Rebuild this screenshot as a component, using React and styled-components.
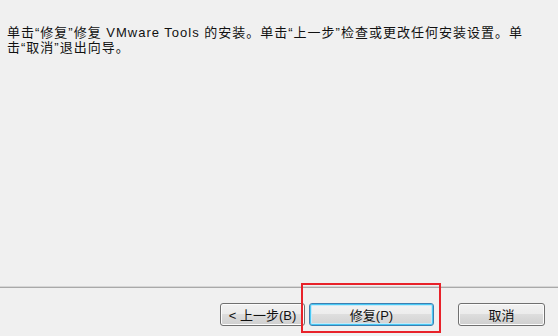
import React from "react";
import styled, { createGlobalStyle, css } from "styled-components";

const Global = createGlobalStyle`
  html, body { margin: 0; padding: 0; background: #f0f0f0; }
  body { width: 558px; height: 336px; overflow: hidden; }
`;

const Dialog = styled.div`
  width: 558px;
  height: 336px;
  display: flex;
  flex-direction: column;
  background: #f0f0f0;
  font-family: "Liberation Sans", "Noto Sans CJK SC", sans-serif;
  color: #000;
`;

const Content = styled.div`
  height: 286px;
  box-sizing: border-box;
  padding: 25px 0 0 7px;
`;

const Message = styled.p`
  margin: 0;
  width: 516px;
  font-size: 13px;
  line-height: 15px;
  letter-spacing: 1px;
  color: #111;
`;

const Separator = styled.div`
  height: 1px;
  background: #d6d6d6;
  border-bottom: 1px solid #a9a9a9;
`;

const Footer = styled.div`
  flex: 1;
  display: flex;
  justify-content: flex-end;
  align-items: flex-start;
  padding: 15px 13px 0 0;
`;

const Button = styled.button`
  box-sizing: border-box;
  height: 23px;
  width: ${(p) => p.$w}px;
  margin-left: ${(p) => p.$gap}px;
  padding: 0;
  font-family: "Liberation Sans", "Noto Sans CJK SC", sans-serif;
  font-size: 13px;
  color: #111;
  border-radius: 3px;
  border: 1px solid #707070;
  background: linear-gradient(#f2f2f2 0%, #ebebeb 50%, #dddddd 50%, #cfcfcf 100%);
  box-shadow: inset 0 0 0 1px #fcfcfc;
  display: flex;
  align-items: center;
  justify-content: center;
  ${(p) =>
    p.$default &&
    css`
      border-color: #3c7fb1;
      box-shadow: inset 0 0 0 1px #48c8f4, inset 0 0 0 2px #c6e9f8;
      background: linear-gradient(#f3f3f3 0%, #ececec 50%, #dedede 50%, #d2d2d2 100%);
    `}
`;

const Highlight = styled.div`
  position: relative;
  margin-left: 4px;
  display: flex;
`;

const RedBox = styled.div`
  position: absolute;
  left: -8px;
  top: -20px;
  width: 140px;
  height: 50px;
  box-sizing: border-box;
  border: 2px solid #e8222a;
  pointer-events: none;
`;

export default function App() {
  return (
    <>
      <Global />
      <Dialog>
        <Content>
          <Message>
            单击“修复”修复 VMware Tools 的安装。单击“上一步”检查或更改任何安装设置。单击“取消”退出向导。
          </Message>
        </Content>
        <Separator />
        <Footer>
          <Button $w={85} $gap={0}>&lt; 上一步(B)</Button>
          <Highlight>
            <Button $w={125} $gap={0} $default>修复(P)</Button>
            <RedBox />
          </Highlight>
          <Button $w={87} $gap={24}>取消</Button>
        </Footer>
      </Dialog>
    </>
  );
}
